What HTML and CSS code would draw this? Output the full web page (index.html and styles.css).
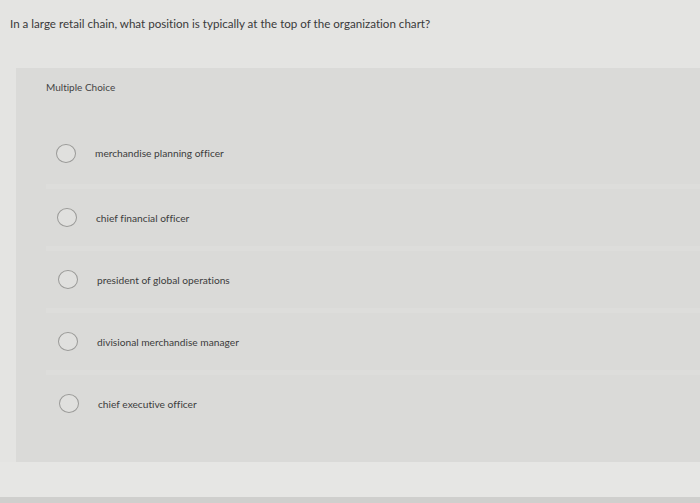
FILE: index.html
```html
<!DOCTYPE html>
<html>
<head>
<meta charset="utf-8">
<link rel="stylesheet" href="styles.css">
</head>
<body>
<div class="page">
  <p class="question">In a large retail chain, what position is typically at the top of the organization chart?</p>
  <section class="panel">
    <div class="label">Multiple Choice</div>
    <ul class="options">
      <li class="option o1"><span class="radio"></span><span class="text">merchandise planning officer</span></li>
      <li class="option o2"><span class="radio"></span><span class="text">chief financial officer</span></li>
      <li class="option o3"><span class="radio"></span><span class="text">president of global operations</span></li>
      <li class="option o4"><span class="radio"></span><span class="text">divisional merchandise manager</span></li>
      <li class="option o5"><span class="radio"></span><span class="text">chief executive officer</span></li>
    </ul>
  </section>
  <div class="bottom"></div>
</div>
</body>
</html>
```
FILE: styles.css
```css
html, body {
  margin: 0;
  padding: 0;
  width: 700px;
  height: 503px;
  overflow: hidden;
  background: #e4e4e2;
  font-family: Lato, "Open Sans", sans-serif;
  font-variant-ligatures: none;
}
.page {
  display: flex;
  flex-direction: column;
  height: 503px;
}
.question {
  margin: 0;
  padding: 17px 0 0 10px;
  height: 68px;
  box-sizing: border-box;
  font-size: 11.6px;
  color: #3a3a3a;
}
.panel {
  margin-left: 16px;
  height: 394px;
  background: #dadad8;
  padding: 13px 0 0 30px;
  box-sizing: border-box;
}
.label {
  font-size: 10px;
  color: #444;
  height: 41px;
}
.options {
  list-style: none;
  margin: 0;
  padding: 0;
  display: flex;
  flex-direction: column;
}
.option {
  display: flex;
  align-items: center;
  height: 62px;
  gap: 19px;
  padding-left: 10px;
  box-sizing: border-box;
}
.o2 { padding-left: 11px; }
.o3 { padding-left: 12px; }
.o4 { padding-left: 12px; }
.o5 { padding-left: 13px; }
.option + .option { border-top: 5px solid #dddddb; }
.radio {
  width: 20px;
  height: 19px;
  border-radius: 50%;
  border: 1px solid #9a9a98;
  box-sizing: border-box;
  background: #e0e0de;
}
.text {
  font-size: 10.2px;
  color: #3c3c3c;
}
.bottom {
  flex: 1;
  background: #e6e6e4;
  border-bottom: 6px solid #cfcfcd;
}
```
